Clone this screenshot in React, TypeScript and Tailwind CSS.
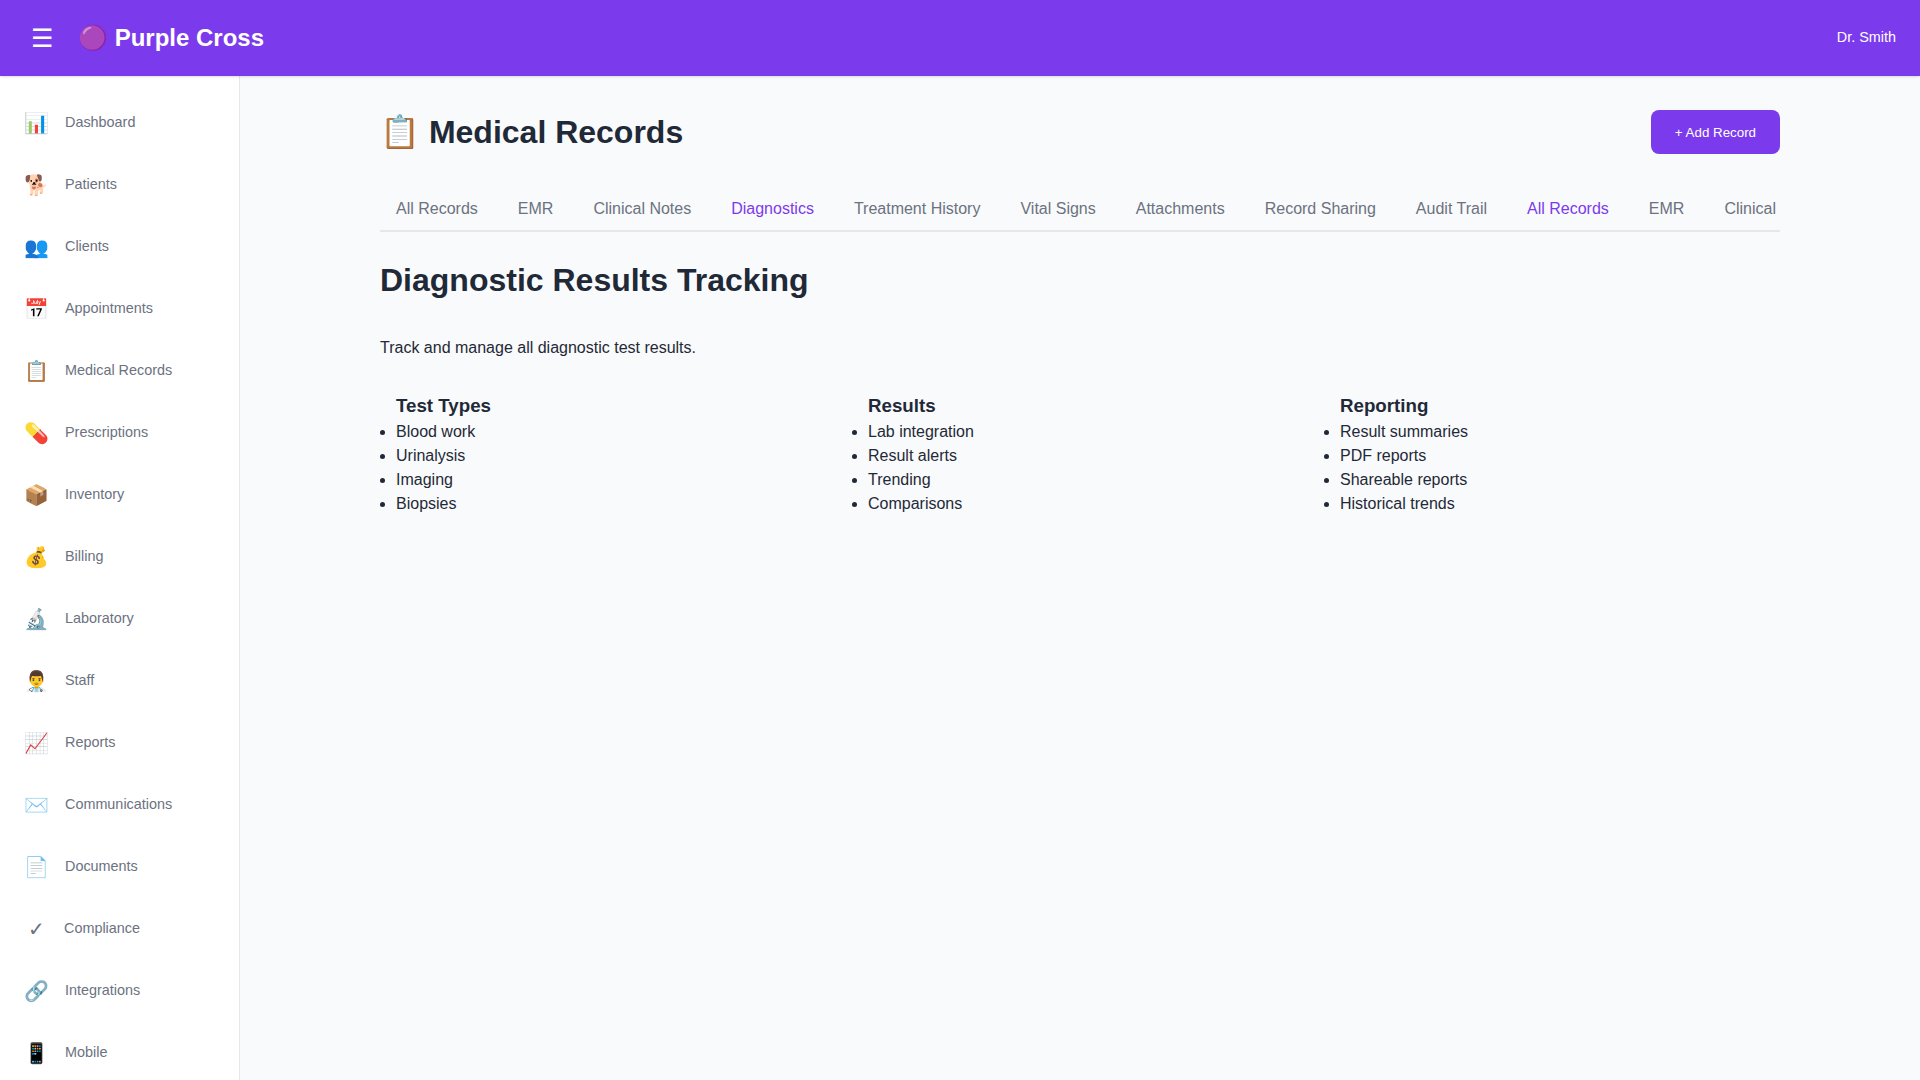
const navItems = [
  { icon: "📊", label: "Dashboard" },
  { icon: "🐕", label: "Patients" },
  { icon: "👥", label: "Clients" },
  { icon: "📅", label: "Appointments" },
  { icon: "📋", label: "Medical Records" },
  { icon: "💊", label: "Prescriptions" },
  { icon: "📦", label: "Inventory" },
  { icon: "💰", label: "Billing" },
  { icon: "🔬", label: "Laboratory" },
  { icon: "👨‍⚕️", label: "Staff" },
  { icon: "📈", label: "Reports" },
  { icon: "✉️", label: "Communications" },
  { icon: "📄", label: "Documents" },
  { icon: "✓", label: "Compliance" },
  { icon: "🔗", label: "Integrations" },
  { icon: "📱", label: "Mobile" },
];

const tabs = [
  "All Records",
  "EMR",
  "Clinical Notes",
  "Diagnostics",
  "Treatment History",
  "Vital Signs",
  "Attachments",
  "Record Sharing",
  "Audit Trail",
  "All Records",
  "EMR",
  "Clinical Notes",
  "Diagnostics",
];

const activeTabs = [3, 9];

const sections = [
  { title: "Test Types", items: ["Blood work", "Urinalysis", "Imaging", "Biopsies"] },
  { title: "Results", items: ["Lab integration", "Result alerts", "Trending", "Comparisons"] },
  { title: "Reporting", items: ["Result summaries", "PDF reports", "Shareable reports", "Historical trends"] },
];

export default function App() {
  return (
    <div className="flex h-[1080px] flex-col overflow-hidden bg-[#f9fafb] font-['Liberation_Sans',Arial,sans-serif] text-[#1f2937]">
      <header className="relative z-10 flex h-[76px] shrink-0 items-center justify-between bg-[#7c3aed] px-6 text-white shadow-sm">
        <div className="flex items-center gap-4">
          <button className="flex h-9 w-[38px] items-center justify-center pr-[2px] text-[25px] leading-none">☰</button>
          <div className="text-2xl font-bold">🟣 Purple Cross</div>
        </div>
        <div className="mb-[1px] text-[14.4px]">Dr. Smith</div>
      </header>

      <div className="flex min-h-0 flex-1">
        <aside className="w-[240px] shrink-0 overflow-hidden border-r border-[#e5e7eb] bg-white pt-4">
          {navItems.map((item) => (
            <div key={item.label} className="flex h-[62px] items-center gap-4 px-6 text-[14.4px] text-[#6b7280]">
              <span className="min-w-6 text-center text-xl">{item.icon}</span>
              <span>{item.label}</span>
            </div>
          ))}
        </aside>

        <main className="min-w-0 flex-1 px-[140px] pt-[34px]">
          <div className="mx-auto max-w-[1400px]">
            <div className="flex h-11 items-center justify-between">
              <h1 className="text-[32px] font-bold">📋 Medical Records</h1>
              <button className="h-11 rounded-lg bg-[#7c3aed] px-6 pt-px text-[13.33px] text-white">+ Add Record</button>
            </div>

            <div className="mt-[34px] flex gap-2 overflow-hidden border-b-2 border-[#e5e7eb]">
              {tabs.map((tab, i) => (
                <div
                  key={i}
                  className={
                    activeTabs.includes(i)
                      ? "shrink-0 whitespace-nowrap px-4 py-3 text-base leading-[18px] text-[#7c3aed]"
                      : "shrink-0 whitespace-nowrap px-4 py-3 text-base leading-[18px] text-[#6b7280]"
                  }
                >
                  {tab}
                </div>
              ))}
            </div>

            <h2 className="mt-[29px] text-[32px] leading-[1.2] font-bold">Diagnostic Results Tracking</h2>
            <p className="mt-[37px] text-base">Track and manage all diagnostic test results.</p>

            <div className="mt-8 grid grid-cols-3 gap-4">
              {sections.map((section) => (
                <div key={section.title} className="pl-4">
                  <h3 className="mb-px text-[18.72px] leading-[27px] font-bold">{section.title}</h3>
                  <ul className="list-disc">
                    {section.items.map((item) => (
                      <li key={item} className="text-base">{item}</li>
                    ))}
                  </ul>
                </div>
              ))}
            </div>
          </div>
        </main>
      </div>
    </div>
  );
}
